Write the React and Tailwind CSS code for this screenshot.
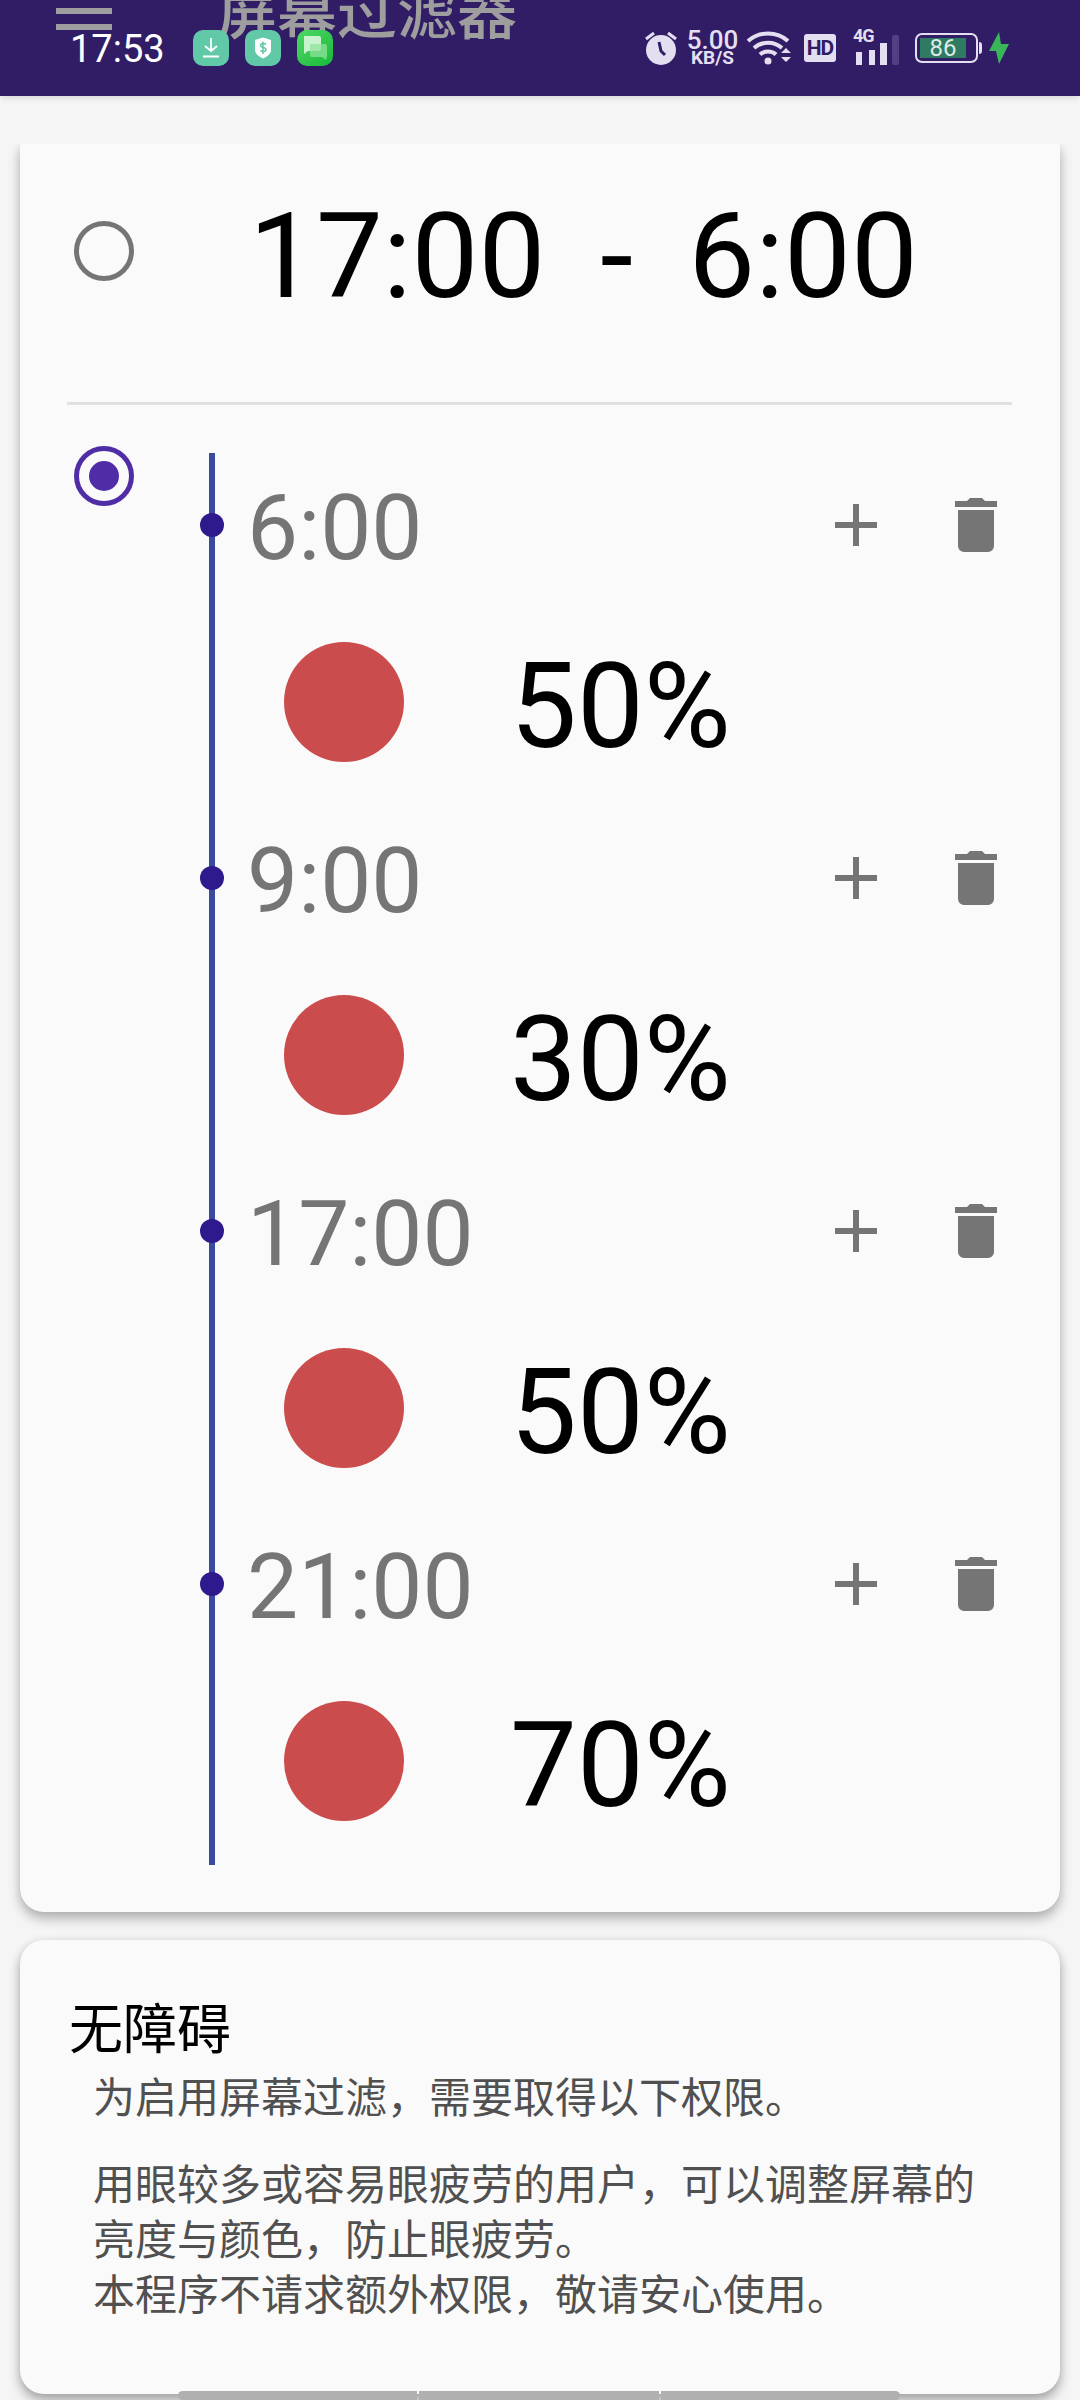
const SANS = "font-['Roboto','Noto_Sans_CJK_SC',sans-serif]";

function Plus() {
  return (
    <svg width="42" height="42" viewBox="0 0 42 42" className="block">
      <path d="M18 0h6v18h18v6H24v18h-6V24H0v-6h18z" fill="#757575" />
    </svg>
  );
}

function Trash() {
  return (
    <svg width="42" height="54" viewBox="0 0 42 54" className="block">
      <path d="M0 3h12l3-3h12l3 3h12v6H0zM3 12h36v36a6 6 0 0 1-6 6H9a6 6 0 0 1-6-6z" fill="#757575" />
    </svg>
  );
}

function Entry({ time, value }) {
  return (
    <div className="relative h-[353px] last:h-[334px]">
      <div className="absolute left-[-15px] top-[41px] w-6 h-6 rounded-full bg-[#2e1a8c]" />
      <div className="flex items-center h-[106px] pl-[32px]">
        <div className="text-[91px] leading-none text-[#757575] pt-[6px]">{time}</div>
        <div className="ml-auto w-[42px] h-[42px]"><Plus /></div>
        <div className="ml-[78px]"><Trash /></div>
      </div>
      <div className="flex items-center mt-[64px] h-[120px] pl-[69px]">
        <div className="w-[120px] h-[120px] rounded-full bg-[#cb4c4c]" />
        <div className="w-[327px] pt-2 text-right text-[119px] leading-none text-black">{value}</div>
      </div>
    </div>
  );
}

function StatusBar() {
  return (
    <div className="relative z-10 h-24 bg-[#311c66] flex items-start pt-[30px] pl-[70px] pr-[71px] shadow-[0_2px_6px_rgba(0,0,0,0.12)]">
      <div className="absolute left-[56px] top-[8px] w-[56px] flex flex-col gap-[10px]">
        <div className="h-[6px] bg-[#9e9e9e]" />
        <div className="h-[6px] bg-[#9e9e9e]" />
      </div>
      <div className="absolute left-[217px] top-[-21px] text-[60px] leading-[70px] font-medium text-[#9e9e9e] whitespace-nowrap">屏幕过滤器</div>
      <div className="relative text-white text-[38px] leading-[38px] w-[123px]">17:53</div>
      <div className="relative flex gap-[16px]">
        <div className="w-9 h-9 rounded-[10px] bg-[#62c9a8] flex items-center justify-center">
          <svg width="18" height="20" viewBox="0 0 18 20"><path d="M9 0v13M3 8l6 5 6-5M1 18.500h16" stroke="#fff" strokeWidth="1.800" fill="none" /></svg>
        </div>
        <div className="w-9 h-9 rounded-[10px] bg-[#62c9a8] flex items-center justify-center">
          <svg width="18" height="22" viewBox="0 0 18 22"><path d="M1 3l8-2.500L17 3v10c0 4-4 6.500-8 8.500-4-2-8-4.500-8-8.500z" fill="#fff" /><path d="M12 7.500C11 6 6.500 6 6.500 8.500s5.500 1.500 5.500 4-4.500 2.500-5.500 1M9 4.500V17" stroke="#62c9a8" strokeWidth="1.500" fill="none" /></svg>
        </div>
        <div className="w-9 h-9 rounded-[10px] bg-gradient-to-br from-[#4cd964] to-[#12b83a] flex items-center justify-center">
          <svg width="26" height="26" viewBox="0 0 26 26"><path d="M2 1h15a2 2 0 0 1 2 2v11a2 2 0 0 1-2 2H6l-4 3z" fill="#c9f2cf" /><path d="M8 9h15a2 2 0 0 1 2 2v10l-1 4-4-3H10a2 2 0 0 1-2-2z" fill="#8fe39c" opacity=".75" /></svg>
        </div>
      </div>
      <div className="relative ml-auto flex items-center h-9 text-[#e4dff0]">
        <svg width="32" height="34" viewBox="0 0 32 34">
          <circle cx="16" cy="19" r="15" fill="#e4dff0" />
          <path d="M14 11l2 9 4 4" stroke="#311c66" strokeWidth="3" fill="none" />
          <path d="M1 8l8-6M31 8l-8-6" stroke="#e4dff0" strokeWidth="3" />
        </svg>
        <div className="ml-[10px] flex flex-col items-center w-[51px] font-medium">
          <div className="text-[26px] leading-[20px]">5.00</div>
          <div className="text-[19px] leading-[16px] font-bold">KB/S</div>
        </div>
        <svg width="44" height="34" viewBox="0 0 44 34" className="ml-[9px]">
          <path d="M1 10c11-10 29-10 40 0M7 17c8-7 20-7 28 0M13 23.500c4-4 12-4 16 0" stroke="#e4dff0" strokeWidth="4" fill="none" />
          <circle cx="21" cy="30" r="3.500" fill="#e4dff0" />
          <path d="M34 22l5-5 5 5zM34 26h10l-5 5z" fill="#e4dff0" />
        </svg>
        <div className="ml-[13px] w-8 h-7 rounded-[3px] bg-[#e4dff0] text-[#311c66] text-[21px] leading-7 font-bold text-center tracking-[-1px]">HD</div>
        <div className="relative ml-[17px] w-[46px] h-[34px]">
          <div className="absolute left-0 top-[-3px] text-[18px] leading-4 font-bold tracking-[-1px]">4G</div>
          <div className="absolute left-[3px] bottom-0 w-[6px] h-[13px] bg-[#e4dff0]" />
          <div className="absolute left-[16px] bottom-0 w-[6px] h-[15px] bg-[#e4dff0]" />
          <div className="absolute left-[27px] bottom-0 w-[7px] h-[22px] bg-[#e4dff0]" />
          <div className="absolute left-[39px] bottom-0 w-[7px] h-[30px] rounded-[2px] bg-[#524083]" />
        </div>
        <div className="ml-[16px] w-[63px] h-[30px] border-[2px] border-[#e4dff0] rounded-[7px] p-[3px]">
          <div className="w-[46px] h-5 bg-[#317a62] text-[24px] leading-5 text-center text-[#dcebe3]">86</div>
        </div>
        <div className="ml-[1px] w-[3px] h-3 bg-[#e4dff0] rounded-r-sm" />
        <svg width="20" height="32" viewBox="0 0 20 32" className="ml-[7px]">
          <path d="M10 0L0 19h7l3 13 10-20h-8z" fill="#3bb55a" />
        </svg>
      </div>
    </div>
  );
}

export default function App() {
  return (
    <div className={`relative w-[1080px] h-[2400px] overflow-hidden bg-[#f5f5f5] ${SANS}`}>
      <StatusBar />
      <div className="pt-12">
        <div className="overflow-hidden px-5 pb-7">
          <div className="h-[1768px] bg-[#fafafa] rounded-b-[24px] shadow-[0_7px_12px_rgba(0,0,0,0.26),0_0_8px_rgba(0,0,0,0.08)]">
            <div className="h-[261px] ml-[47px] mr-[48px] border-b-[3px] border-[#e0e0e0] flex items-start">
              <div className="mt-[77px] ml-[7px] w-[60px] h-[60px] rounded-full border-[5px] border-[#757575]" />
              <div className="ml-[115px] mt-[38px] text-[119px] leading-[150px] text-black whitespace-pre [word-spacing:-2px]">17:00  -  6:00</div>
            </div>
            <div className="flex">
              <div className="ml-[54px] mt-[41px] w-[60px] h-[60px] rounded-full border-[5px] border-[#4f2da6] flex items-center justify-center">
                <div className="w-[30px] h-[30px] rounded-full bg-[#4f2da6]" />
              </div>
              <div className="ml-[75px] mt-[48px] w-[788px] h-[1412px] border-l-[6px] border-[#3a4a9f] pt-[19px]">
                <Entry time="6:00" value="50%" />
                <Entry time="9:00" value="30%" />
                <Entry time="17:00" value="50%" />
                <Entry time="21:00" value="70%" />
              </div>
            </div>
          </div>
        </div>
        <div className="px-5">
          <div className="relative h-[454px] bg-[#fafafa] rounded-[24px] shadow-[0_7px_12px_rgba(0,0,0,0.3),0_0_8px_rgba(0,0,0,0.08)] pt-[61px] pl-[49px]">
            <div className="text-[54px] leading-[60px] text-black">无障碍</div>
            <div className="pl-6 text-[#505050] text-[42px] leading-[55px]">
              <div className="mt-[10px]">为启用屏幕过滤，需要取得以下权限。</div>
              <div className="mt-8 w-[900px]">用眼较多或容易眼疲劳的用户，可以调整屏幕的亮度与颜色，防止眼疲劳。</div>
              <div>本程序不请求额外权限，敬请安心使用。</div>
            </div>
            <div className="absolute left-[158px] top-[451px] flex gap-[2px] h-[9px] w-[722px]">
              <div className="flex-1 rounded-l-[5px] bg-[#b0b0b0]" />
              <div className="flex-1 bg-[#b0b0b0]" />
              <div className="flex-1 rounded-r-[5px] bg-[#b0b0b0]" />
            </div>
          </div>
        </div>
      </div>
    </div>
  );
}
